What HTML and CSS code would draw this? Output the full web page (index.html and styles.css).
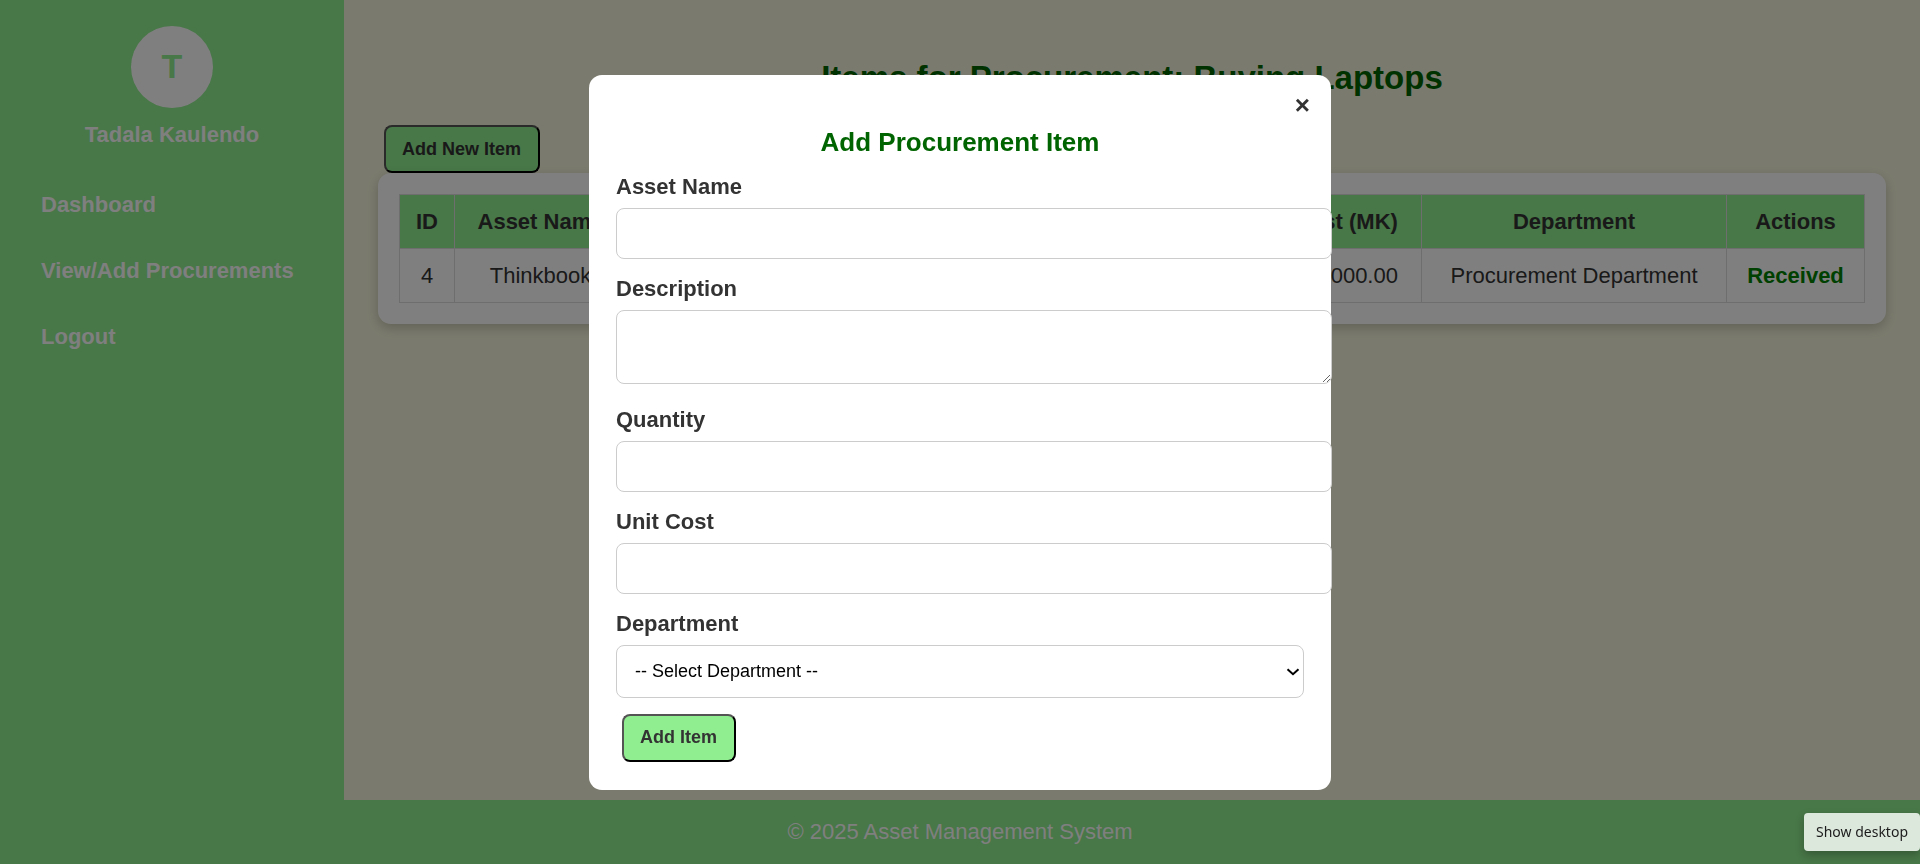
FILE: index.html
```html
<!DOCTYPE html>
<html lang="en">
<head>
<meta charset="utf-8">
<title>Items for Procurement</title>
<link rel="stylesheet" href="styles.css">
</head>
<body>
<div class="layout">
  <aside class="sidebar">
    <div class="profile">
      <div class="avatar">T</div>
      <div class="profile-name">Tadala Kaulendo</div>
    </div>
    <nav class="menu">
      <a href="#">Dashboard</a>
      <a href="#">View/Add Procurements</a>
      <a href="#">Logout</a>
    </nav>
  </aside>
  <main class="main">
    <h1 class="page-title">Items for Procurement: Buying Laptops</h1>
    <button class="btn" type="button">Add New Item</button>
    <section class="card">
      <table class="items">
        <colgroup>
          <col class="col-id"><col class="col-name"><col class="col-desc"><col class="col-qty"><col class="col-cost"><col class="col-dept"><col class="col-act">
        </colgroup>
        <thead>
          <tr><th>ID</th><th>Asset Name</th><th>Description</th><th>Quantity</th><th>Unit Cost (MK)</th><th>Department</th><th>Actions</th></tr>
        </thead>
        <tbody>
          <tr><td>4</td><td>Thinkbook</td><td></td><td></td><td>100,000,000.00</td><td>Procurement Department</td><td><span class="received">Received</span></td></tr>
        </tbody>
      </table>
    </section>
  </main>
</div>
<footer class="footer">© 2025 Asset Management System</footer>

<div class="overlay">
  <div class="modal" role="dialog" aria-labelledby="modal-title">
    <button class="close" type="button" aria-label="Close">×</button>
    <h2 class="modal-title" id="modal-title">Add Procurement Item</h2>
    <form class="form">
      <label for="asset">Asset Name</label>
      <input class="field" id="asset" type="text">
      <label for="description">Description</label>
      <textarea class="field field-area" id="description"></textarea>
      <label for="quantity">Quantity</label>
      <input class="field" id="quantity" type="number">
      <label for="cost">Unit Cost</label>
      <input class="field" id="cost" type="number">
      <label for="department">Department</label>
      <div class="select-wrap">
        <select class="select" id="department">
          <option>-- Select Department --</option>
        </select>
        <svg class="chevron" width="14" height="8" viewBox="0 0 14 8" aria-hidden="true"><path d="M1.5 1.2 7 6.2 12.5 1.2" fill="none" stroke="#000" stroke-width="2"/></svg>
      </div>
      <button class="btn" type="submit">Add Item</button>
    </form>
  </div>
</div>
<div class="tooltip" role="tooltip">Show desktop</div>
</body>
</html>
```
FILE: styles.css
```css
body {
  margin: 0;
  min-height: 100vh;
  display: flex;
  flex-direction: column;
  background: beige;
  color: #333;
  font: 22px/32px "Liberation Sans", Arial, sans-serif;
}

.layout {
  flex: 1;
  display: flex;
}

.sidebar {
  width: 344px;
  flex-shrink: 0;
  box-sizing: border-box;
  padding-top: 26px;
  background: lightgreen;
  color: #fff;
  font-weight: bold;
}

.profile {
  display: flex;
  flex-direction: column;
  align-items: center;
  gap: 11px;
}

.avatar {
  width: 82px;
  height: 82px;
  border-radius: 50%;
  background: #fff;
  color: lightgreen;
  font-size: 34px;
  line-height: 80px;
  text-align: center;
}

.menu {
  display: flex;
  flex-direction: column;
  gap: 34px;
  padding: 38px 41px;
}

.menu a {
  color: #fff;
  text-decoration: none;
}

.main {
  flex: 1;
  min-width: 0;
  padding: 54px 34px;
}

.page-title {
  margin: 0 0 23px;
  color: darkgreen;
  font-size: 33px;
  line-height: 48px;
  text-align: center;
}

.btn {
  display: block;
  height: 48px;
  margin: 0 6px;
  padding: 0 17px 0 16px;
  border: 2px outset #000;
  border-radius: 8px;
  background: lightgreen;
  color: #333;
  font: bold 18px "Liberation Sans", Arial, sans-serif;
}

.card {
  padding: 21px;
  border-radius: 13px;
  background: #fff;
  box-shadow: 0 4px 12px rgba(0, 0, 0, 0.2);
}

.items {
  width: 100%;
  table-layout: fixed;
  border-collapse: collapse;
  text-align: center;
}

.items th,
.items td {
  padding: 11px 0 10px;
  border: 1px solid #ddd;
}

.items th {
  background: lightgreen;
}

.col-id { width: 55px; }
.col-name { width: 172px; }
.col-qty { width: 136px; }
.col-cost { width: 200px; }
.col-dept { width: 305px; }
.col-act { width: 138px; }

.received {
  color: green;
  font-weight: bold;
}

.footer {
  background: lightgreen;
  color: #fff;
  line-height: 64px;
  text-align: center;
}

.overlay {
  position: fixed;
  inset: 0;
  display: flex;
  align-items: center;
  justify-content: center;
  background: rgba(0, 0, 0, 0.5);
}

.modal {
  position: relative;
  width: 688px;
  padding: 49px 27px 28px;
  border-radius: 13px;
  background: #fff;
}

.close {
  position: absolute;
  top: 14px;
  right: 21px;
  padding: 0;
  border: 0;
  background: none;
  color: #333;
  font: bold 26px/32px "Liberation Sans", Arial, sans-serif;
}

.modal-title {
  margin: 0 0 11px;
  color: darkgreen;
  font-size: 26px;
  line-height: 36px;
  text-align: center;
}

.form label {
  display: block;
  margin-bottom: 5px;
  font-weight: bold;
}

.field,
.select {
  display: block;
  border: 1px solid #ccc;
  border-radius: 8px;
  background: #fff;
  font: 18px "Liberation Sans", Arial, sans-serif;
}

.field {
  box-sizing: content-box;
  width: 100%;
  height: 21px;
  margin: 0 0 14px;
  padding: 14px 13px;
}

.field-area {
  height: 44px;
  margin-bottom: 20px;
}

.select-wrap {
  position: relative;
  margin-bottom: 16px;
}

.select {
  appearance: none;
  width: 100%;
  height: 53px;
  margin: 0;
  padding: 0 18px;
  color: #000;
}

.chevron {
  position: absolute;
  top: 23px;
  right: 4px;
  pointer-events: none;
}

.tooltip {
  position: fixed;
  right: 0;
  bottom: 13px;
  padding: 0 12px;
  border-radius: 4px;
  background: #dde8dd;
  box-shadow: 0 4px 8px rgba(0, 0, 0, 0.25);
  color: #1b1b1b;
  font: 14px/38px "Noto Sans", "Open Sans", sans-serif;
}
```
